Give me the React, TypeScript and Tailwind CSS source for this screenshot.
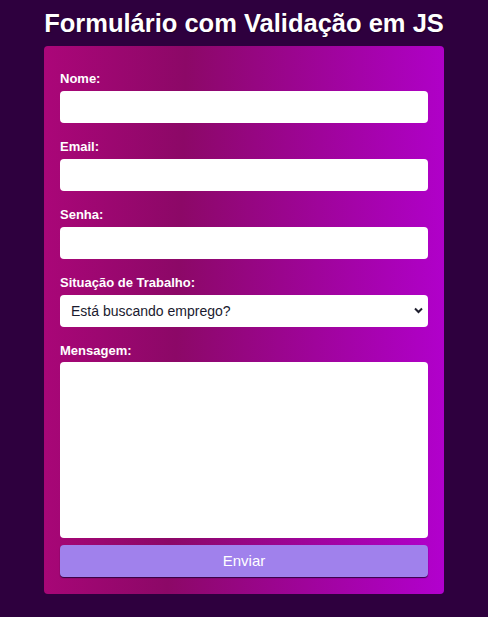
import { useState } from "react"

const fields = [
  { id: "nome", label: "Nome:", type: "text" },
  { id: "email", label: "Email:", type: "email" },
  { id: "senha", label: "Senha:", type: "password" },
]

export default function App() {
  const [situacao, setSituacao] = useState("")

  return (
    <div className="min-h-[617px] w-full bg-[#2e003e] font-['Liberation_Sans',Arial,sans-serif] text-white">
      <div className="mx-auto flex w-[400px] flex-col pt-[8px]">
        <h1 className="text-center text-[25.5px] font-bold leading-[30px] [text-shadow:1px_1px_1px_rgba(0,0,0,0.3)]">
          Formulário com Validação em JS
        </h1>

        <form
          className="mt-[8px] flex flex-col rounded-[4px] bg-[linear-gradient(92deg,#ab0679_0%,#8c0867_34%,#b200ce_100%)] px-4 pt-[25px] pb-[17px]"
          onSubmit={(e) => e.preventDefault()}
        >
          {fields.map((f) => (
            <div key={f.id} className="mb-[16px] flex flex-col">
              <label htmlFor={f.id} className="mb-[5px] text-[13px] font-bold leading-[15px]">
                {f.label}
              </label>
              <input id={f.id} type={f.type} className="h-[32px] rounded-[4px] bg-white px-3 text-[14px] text-[#222] outline-none" />
            </div>
          ))}

          <div className="mb-[16px] flex flex-col">
            <label htmlFor="situacao" className="mb-[5px] text-[13px] font-bold leading-[15px]">
              Situação de Trabalho:
            </label>
            <div className="relative">
              <select
                id="situacao"
                value={situacao}
                onChange={(e) => setSituacao(e.target.value)}
                className="h-[32px] w-full appearance-none rounded-[4px] bg-white pl-[11px] text-[14px] text-[#1a1a2e] outline-none"
              >
                <option value="">Está buscando emprego?</option>
                <option value="sim">Sim</option>
                <option value="nao">Não</option>
              </select>
              <svg className="pointer-events-none absolute right-[5px] top-[12px]" width="9" height="7" viewBox="0 0 9 7">
                <path d="M1 1.5 L4.5 5 L8 1.5" fill="none" stroke="#1f1f2e" strokeWidth="2" />
              </svg>
            </div>
          </div>

          <div className="flex flex-col">
            <label htmlFor="mensagem" className="mb-[4px] text-[13px] font-bold leading-[15px]">
              Mensagem:
            </label>
            <textarea id="mensagem" className="h-[176px] resize-none rounded-[4px] bg-white p-2 text-[14px] text-[#222] outline-none" />
          </div>

          <button
            type="submit"
            className="mt-[7px] h-[32px] rounded-[4px] bg-[#a081ec] text-[15px] text-white shadow-[0_1px_1px_rgba(40,0,60,0.9)]"
          >
            Enviar
          </button>
        </form>
      </div>
    </div>
  )
}
